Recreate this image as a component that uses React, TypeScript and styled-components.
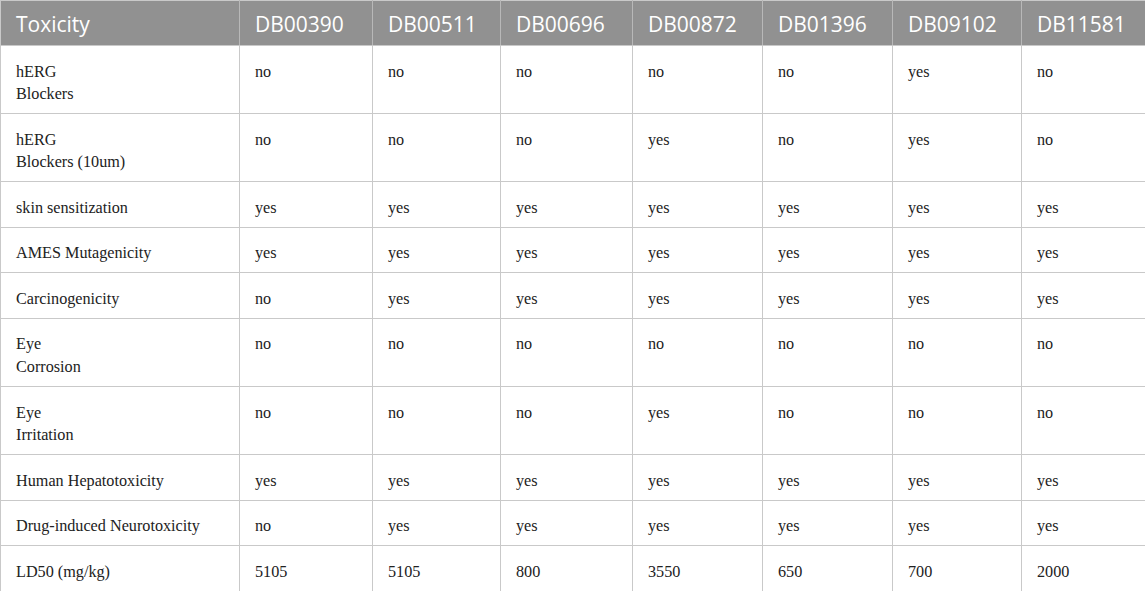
import React from 'react';
import styled, { createGlobalStyle } from 'styled-components';

const GlobalStyle = createGlobalStyle`
  html, body {
    margin: 0;
    padding: 0;
    background: #ffffff;
  }
`;

const Table = styled.table`
  width: 1145px;
  border-collapse: collapse;
  table-layout: fixed;
  border: 1px solid #c9c9c9;
`;

const HeadCell = styled.th`
  background: #919191;
  color: #ffffff;
  font-family: 'Open Sans', 'Liberation Sans', sans-serif;
  font-weight: 400;
  font-size: 21px;
  text-align: left;
  height: 45px;
  padding: 1px 15px 0;
  box-sizing: border-box;
  border-left: 1px solid #b8b8b8;
  border-bottom: 1px solid #c9c9c9;
  &:first-child {
    border-left: none;
  }
`;

const Cell = styled.td`
  font-family: 'Liberation Serif', 'DejaVu Serif', serif;
  font-size: 16.2px;
  line-height: 22.7px;
  color: #222222;
  vertical-align: top;
  padding: 14.6px 15px 7.2px;
  border: 1px solid #c9c9c9;
`;

const columns = [
  { label: 'Toxicity', width: 239 },
  { label: 'DB00390', width: 133 },
  { label: 'DB00511', width: 128 },
  { label: 'DB00696', width: 132 },
  { label: 'DB00872', width: 130 },
  { label: 'DB01396', width: 130 },
  { label: 'DB09102', width: 129 },
  { label: 'DB11581', width: 124 },
];

const rows: { name: string[]; values: string[] }[] = [
  { name: ['hERG', 'Blockers'], values: ['no', 'no', 'no', 'no', 'no', 'yes', 'no'] },
  { name: ['hERG', 'Blockers (10um)'], values: ['no', 'no', 'no', 'yes', 'no', 'yes', 'no'] },
  { name: ['skin sensitization'], values: ['yes', 'yes', 'yes', 'yes', 'yes', 'yes', 'yes'] },
  { name: ['AMES Mutagenicity'], values: ['yes', 'yes', 'yes', 'yes', 'yes', 'yes', 'yes'] },
  { name: ['Carcinogenicity'], values: ['no', 'yes', 'yes', 'yes', 'yes', 'yes', 'yes'] },
  { name: ['Eye', 'Corrosion'], values: ['no', 'no', 'no', 'no', 'no', 'no', 'no'] },
  { name: ['Eye', 'Irritation'], values: ['no', 'no', 'no', 'yes', 'no', 'no', 'no'] },
  { name: ['Human Hepatotoxicity'], values: ['yes', 'yes', 'yes', 'yes', 'yes', 'yes', 'yes'] },
  { name: ['Drug-induced Neurotoxicity'], values: ['no', 'yes', 'yes', 'yes', 'yes', 'yes', 'yes'] },
  { name: ['LD50 (mg/kg)'], values: ['5105', '5105', '800', '3550', '650', '700', '2000'] },
];

const App: React.FC = () => (
  <>
    <GlobalStyle />
    <Table>
      <colgroup>
        {columns.map((c) => (
          <col key={c.label} style={{ width: c.width }} />
        ))}
      </colgroup>
      <thead>
        <tr>
          {columns.map((c) => (
            <HeadCell key={c.label}>{c.label}</HeadCell>
          ))}
        </tr>
      </thead>
      <tbody>
        {rows.map((r, i) => (
          <tr key={i}>
            <Cell>
              {r.name.map((line, j) => (
                <React.Fragment key={j}>
                  {j > 0 && <br />}
                  {line}
                </React.Fragment>
              ))}
            </Cell>
            {r.values.map((v, j) => (
              <Cell key={j}>{v}</Cell>
            ))}
          </tr>
        ))}
      </tbody>
    </Table>
  </>
);

export default App;
